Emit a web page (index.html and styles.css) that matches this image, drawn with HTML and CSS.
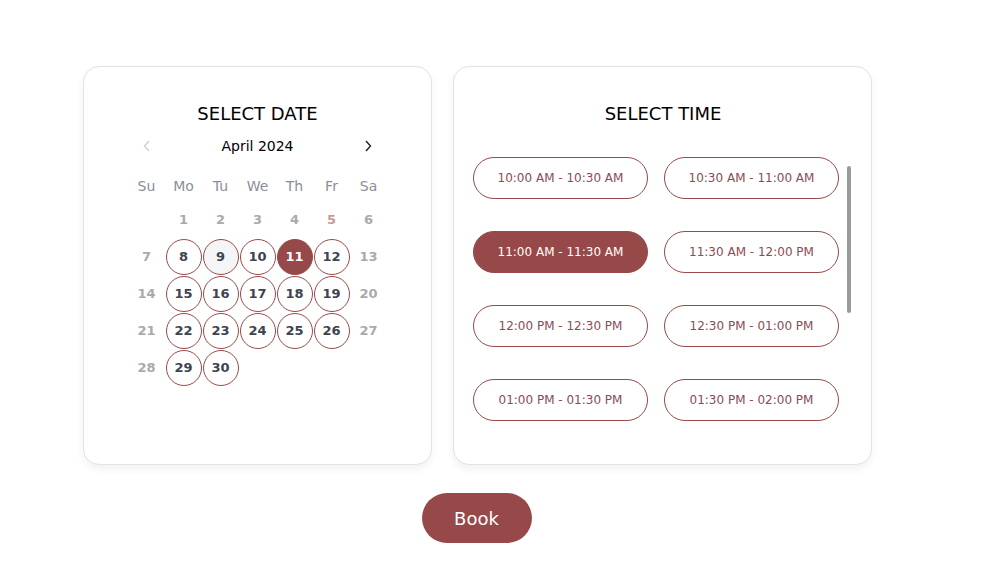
FILE: index.html
```html
<!DOCTYPE html>
<html lang="en">
<head>
<meta charset="utf-8">
<title>Booking</title>
<link rel="stylesheet" href="styles.css">
</head>
<body>
<div class="page">
  <div class="cards">
    <section class="card date-card">
      <h2 class="card-title">SELECT DATE</h2>
      <div class="month-nav">
        <button class="nav-btn prev" aria-label="Previous month">
          <svg width="8" height="12" viewBox="0 0 8 12"><path d="M6 1 L1.5 6 L6 11" fill="none" stroke="currentColor" stroke-width="1.4"/></svg>
        </button>
        <span class="month-label">April 2024</span>
        <button class="nav-btn next" aria-label="Next month">
          <svg width="8" height="12" viewBox="0 0 8 12"><path d="M2 1 L6.5 6 L2 11" fill="none" stroke="currentColor" stroke-width="1.4"/></svg>
        </button>
      </div>
      <div class="calendar">
        <span class="wd">Su</span><span class="wd">Mo</span><span class="wd">Tu</span><span class="wd">We</span><span class="wd">Th</span><span class="wd">Fr</span><span class="wd">Sa</span>

        <span class="day empty"></span>
        <span class="day off">1</span><span class="day off">2</span><span class="day off">3</span><span class="day off">4</span><span class="day off holiday">5</span><span class="day off">6</span>

        <span class="day off">7</span>
        <span class="day avail">8</span><span class="day avail today">9</span><span class="day avail">10</span><span class="day avail selected">11</span><span class="day avail">12</span>
        <span class="day off">13</span>

        <span class="day off">14</span>
        <span class="day avail">15</span><span class="day avail">16</span><span class="day avail">17</span><span class="day avail">18</span><span class="day avail">19</span>
        <span class="day off">20</span>

        <span class="day off">21</span>
        <span class="day avail">22</span><span class="day avail">23</span><span class="day avail">24</span><span class="day avail">25</span><span class="day avail">26</span>
        <span class="day off">27</span>

        <span class="day off">28</span>
        <span class="day avail">29</span><span class="day avail">30</span>
      </div>
    </section>

    <section class="card time-card">
      <h2 class="card-title">SELECT TIME</h2>
      <div class="slots-wrap">
        <div class="slots">
          <button class="slot">10:00 AM - 10:30 AM</button>
          <button class="slot">10:30 AM - 11:00 AM</button>
          <button class="slot active">11:00 AM - 11:30 AM</button>
          <button class="slot">11:30 AM - 12:00 PM</button>
          <button class="slot">12:00 PM - 12:30 PM</button>
          <button class="slot">12:30 PM - 01:00 PM</button>
          <button class="slot">01:00 PM - 01:30 PM</button>
          <button class="slot">01:30 PM - 02:00 PM</button>
        </div>
        <div class="scroll-thumb"></div>
      </div>
    </section>
  </div>
  <div class="actions">
    <button class="book-btn">Book</button>
  </div>
</div>
</body>
</html>
```

FILE: styles.css
```css
* { box-sizing: border-box; }

html, body {
  margin: 0;
  padding: 0;
  background: #ffffff;
}

body {
  font-family: "DejaVu Sans", Verdana, sans-serif;
  color: #000;
}

.page {
  width: 789px;
  margin-left: 83px;
  padding-top: 66px;
}

.cards {
  display: flex;
  gap: 21px;
  align-items: stretch;
}

.card {
  background: #fff;
  border: 1px solid #e2e2e8;
  border-radius: 16px;
  box-shadow: 0 4px 8px rgba(0, 0, 0, 0.06);
  height: 399px;
}

.card-title {
  margin: 0;
  font-size: 18px;
  font-weight: normal;
  line-height: 22px;
  text-align: center;
}

/* Date card */
.date-card {
  width: 349px;
  padding-top: 36px;
  display: flex;
  flex-direction: column;
  align-items: center;
}

.month-nav {
  width: 259px;
  height: 32px;
  margin-top: 5px;
  display: flex;
  align-items: center;
  justify-content: space-between;
}

.nav-btn {
  width: 37px;
  height: 32px;
  border: 0;
  background: none;
  padding: 0;
  display: flex;
  align-items: center;
  justify-content: center;
  color: #222;
}

.nav-btn.prev { color: #cfcfcf; }

.month-label {
  font-size: 14px;
  line-height: 16px;
}

.calendar {
  margin-top: 8px;
  display: grid;
  grid-template-columns: repeat(7, 37px);
  grid-template-rows: 31px repeat(5, 37px);
}

.wd {
  display: flex;
  align-items: center;
  justify-content: center;
  font-size: 14px;
  color: #8a8f98;
}

.day {
  display: flex;
  align-items: center;
  justify-content: center;
  font-size: 13px;
  font-weight: bold;
  color: #aaaaaa;
}

.day.holiday { color: #c99a9a; }

.day.avail {
  width: 36px;
  height: 36px;
  margin: 0.5px;
  border: 1px solid #974949;
  border-radius: 50%;
  color: #3e4450;
}

.day.today { background: #f4f5f7; }

.day.selected {
  background: #974949;
  color: #fff;
}

/* Time card */
.time-card {
  width: 419px;
  padding: 36px 18px 0 19px;
}

.slots-wrap {
  position: relative;
  margin-top: 32px;
  height: 284px;
}

.slots {
  height: 100%;
  display: grid;
  grid-template-columns: 175px 175px;
  column-gap: 16px;
  row-gap: 32px;
  grid-auto-rows: 42px;
  align-content: start;
}

.slot {
  border: 1px solid #974949;
  border-radius: 21px;
  background: #fff;
  color: #8e4a52;
  font-family: "DejaVu Sans", Verdana, sans-serif;
  font-size: 12px;
  padding: 0;
}

.slot.active {
  background: #974949;
  color: #fff;
}

.scroll-thumb {
  position: absolute;
  right: 2px;
  top: 9px;
  width: 4px;
  height: 147px;
  border-radius: 2px;
  background: #9a9a9a;
}

/* Book */
.actions {
  display: flex;
  justify-content: center;
  margin-top: 28px;
  padding-right: 2px;
}

.book-btn {
  width: 110px;
  height: 50px;
  border: 0;
  border-radius: 25px;
  background: #974949;
  color: #fff;
  font-family: "DejaVu Sans", Verdana, sans-serif;
  font-size: 18px;
  padding: 0;
}
```
